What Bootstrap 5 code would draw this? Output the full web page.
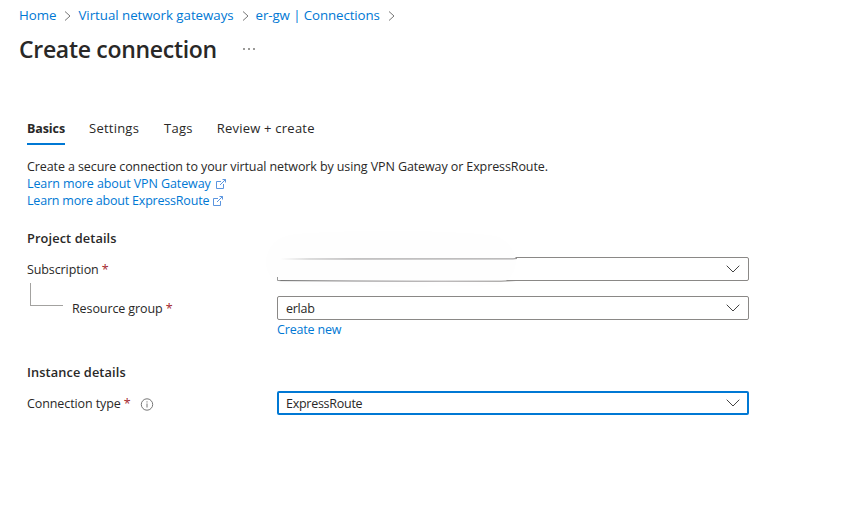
<!DOCTYPE html>
<html lang="en">
<head>
<meta charset="utf-8">
<meta name="viewport" content="width=device-width, initial-scale=1">
<title>Create connection</title>
<link href="https://cdn.jsdelivr.net/npm/bootstrap@5.3.0/dist/css/bootstrap.min.css" rel="stylesheet">
<style>
  body { font-family: "Open Sans", "Noto Sans", sans-serif; font-size: 12.5px; line-height: 17px; letter-spacing: -.1px; color: #292827; background: #fff; overflow: hidden; }
  a { color: #0078d4; text-decoration: none; }
  svg { flex: none; }
  .crumbs { height: 30px; padding-left: 19px; font-size: 13.3px; line-height: 20px; letter-spacing: -.03px; }
  .crumbs svg { margin: 2px 7px 0 8px; }
  .crumbs .current { letter-spacing: -.1px; }
  .page-title { font-size: 23px; line-height: 32px; letter-spacing: -.3px; font-weight: 600; }
  .title-row { margin: 3px 0 0 19px; }
  .title-row svg { margin-left: 26px; }
  .blade { margin: 51px 0 0 27px; width: 722px; }
  .blade-tabs { gap: 24px; height: 29px; font-size: 13px; letter-spacing: .23px; }
  .blade-tabs .nav-link { padding: 4px 0 6px; line-height: 17px; color: #292827; border-bottom: 2px solid transparent; border-radius: 0; }
  .blade-tabs .nav-link.active { font-size: 12.5px; letter-spacing: -.1px; font-weight: 700; border-color: #0078d4; }
  .blade-tabs .tags-tab { margin-left: 1px; }
  .intro { margin-top: 13px; }
  .section-head { font-size: 12.8px; line-height: 18px; letter-spacing: .1px; font-weight: 600; margin: 20px 0 10px; }
  .section-head.instance { margin-top: 25px; }
  .express-link { letter-spacing: -.2px; }
  .express-link svg { margin-left: -1px; }
  .field { height: 24px; }
  .nested-field { margin-top: 15px; }
  .label-col { width: 250px; flex: none; }
  .nested-label { padding-left: 45px; }
  .branch { left: 3px; top: -17px; width: 33px; height: 23px; border: solid #a3a2a0; border-width: 0 0 1px 1px; }
  .req { color: #a4262c; }
  .info { margin: 1px 0 0 9px; }
  .picker { height: 24px; border: 1px solid #8a8886; border-radius: 2px; padding: 0 8px; letter-spacing: -.27px; }
  .picker.focused { border: 2px solid #0078d4; padding: 0 7px; }
  .create-new { margin: 1px 0 0 250px; letter-spacing: -.17px; }
  .smudge { left: -13px; top: -28px; }
</style>
</head>
<body>
<nav class="crumbs d-flex align-items-center" aria-label="breadcrumb">
  <a href="#">Home</a>
  <svg width="7" height="10" fill="none" stroke="#777"><path d="M1 .5 6 5 1 9.500"/></svg>
  <a href="#">Virtual network gateways</a>
  <svg width="7" height="10" fill="none" stroke="#777"><path d="M1 .5 6 5 1 9.500"/></svg>
  <a class="current" href="#">er-gw | Connections</a>
  <svg width="7" height="10" fill="none" stroke="#777"><path d="M1 .5 6 5 1 9.500"/></svg>
</nav>
<div class="title-row d-flex align-items-center">
  <h1 class="page-title m-0">Create connection</h1>
  <svg width="12" height="2" fill="#8a8886"><path d="M0 0h2v2H0zM5 0h2v2H5zM10 0h2v2h-2z" opacity=".85"/></svg>
</div>
<main class="blade">
  <ul class="nav blade-tabs">
    <li><a class="nav-link active" href="#">Basics</a></li>
    <li><a class="nav-link" href="#">Settings</a></li>
    <li class="tags-tab"><a class="nav-link" href="#">Tags</a></li>
    <li><a class="nav-link" href="#">Review + create</a></li>
  </ul>
  <div class="intro">
    <div>Create a secure connection to your virtual network by using VPN Gateway or ExpressRoute.</div>
    <a class="d-flex align-items-center gap-1" href="#"><span>Learn more about VPN Gateway</span>
      <svg width="12" height="12" fill="none" stroke="#5b95df"><path d="M6 3.500H1.500v7h7V6M7.500 1.500h3V4.500M10.500 1.500 5 7"/></svg></a>
    <a class="express-link d-flex align-items-center gap-1" href="#"><span>Learn more about ExpressRoute</span>
      <svg width="12" height="12" fill="none" stroke="#5b95df"><path d="M6 3.500H1.500v7h7V6M7.500 1.500h3V4.500M10.500 1.500 5 7"/></svg></a>
  </div>

  <h2 class="section-head">Project details</h2>
  <div class="field d-flex align-items-center">
    <div class="label-col">Subscription <span class="req">*</span></div>
    <div class="picker flex-grow-1 d-flex align-items-center justify-content-end position-relative">
      <!-- soft redaction over the left half of the subscription field -->
      <svg class="smudge position-absolute" width="256" height="60" fill="none">
        <defs>
          <linearGradient id="fadeTop" gradientUnits="userSpaceOnUse" x1="15" y1="0" x2="90" y2="0"><stop stop-color="#fff"/><stop offset=".4" stop-color="#bbb"/><stop offset="1" stop-color="#918f90"/></linearGradient>
          <linearGradient id="fadeBottom" gradientUnits="userSpaceOnUse" x1="12" y1="0" x2="250" y2="0"><stop stop-color="#666"/><stop offset=".3" stop-color="#858384"/><stop offset=".7" stop-color="#a09c9d"/><stop offset="1" stop-color="#8a8886"/></linearGradient>
        </defs>
        <path fill="#fefefe" d="M24 5C70-1 210 0 234 7q16 9 17 24-1 18-18 24-90 3-205 0Q2 56 1 32 2 11 24 5Z"/>
        <path stroke="url(#fadeTop)" d="M15 29 248 28.900 252 28.500"/>
        <path stroke="url(#fadeBottom)" d="M14.500 50.600 90 51 150 51.200 236 51.200 251 50.500"/>
        <path stroke="#999" d="M12.500 47v3.500h3"/>
      </svg>
      <svg width="14" height="8" fill="none" stroke="#444"><path d="M.7.700 7 7 13.300.700"/></svg>
    </div>
  </div>
  <div class="field nested-field d-flex align-items-center">
    <div class="label-col nested-label position-relative"><span class="branch position-absolute"></span>Resource group <span class="req">*</span></div>
    <div class="picker flex-grow-1 d-flex align-items-center justify-content-between">
      <span>erlab</span>
      <svg width="14" height="8" fill="none" stroke="#444"><path d="M.7.700 7 7 13.300.700"/></svg>
    </div>
  </div>
  <div class="create-new"><a href="#">Create new</a></div>

  <h2 class="section-head instance">Instance details</h2>
  <div class="field d-flex align-items-center">
    <div class="label-col d-flex align-items-center"><span>Connection type <span class="req">*</span></span>
      <svg class="info" width="14" height="14" fill="none" stroke="#777"><circle cx="7" cy="7.500" r="5.700"/><path d="M7 6.500v4M7 4.300v1.200"/></svg></div>
    <div class="picker focused flex-grow-1 d-flex align-items-center justify-content-between">
      <span>ExpressRoute</span>
      <svg width="14" height="8" fill="none" stroke="#444"><path d="M.7.700 7 7 13.300.700"/></svg>
    </div>
  </div>
</main>
</body>
</html>
